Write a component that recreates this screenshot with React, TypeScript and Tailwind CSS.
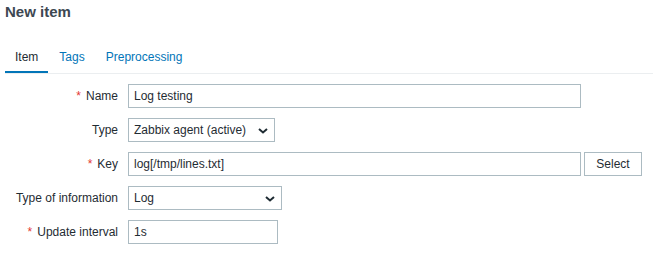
function Chevron() {
  return (
    <svg width="10" height="6" viewBox="0 0 10 6" className="absolute right-[6px] top-[9px]">
      <path d="M1 1l4 3.5L9 1" fill="none" stroke="#1f2c33" strokeWidth="2" />
    </svg>
  );
}

function Label({ text, required }: { text: string; required?: boolean }) {
  return (
    <div className="flex h-6 items-center justify-end text-[12px] text-[#1f2c33]">
      {required && <span className="mr-[5px] text-[#e33734]">*</span>}
      {text}
    </div>
  );
}

function Field({ value, width }: { value: string; width: string }) {
  return (
    <div
      className={`flex h-6 items-center border border-[#acbbc2] bg-white pl-[5px] text-[12px] text-[#1f2c33] ${width}`}
    >
      {value}
    </div>
  );
}

function Select({ value, width }: { value: string; width: string }) {
  return (
    <div
      className={`relative flex h-6 items-center border border-[#acbbc2] bg-white pl-[5px] text-[12px] text-[#1f2c33] ${width}`}
    >
      {value}
      <Chevron />
    </div>
  );
}

export default function App() {
  return (
    <div className="h-[254px] w-[653px] bg-white font-['Liberation_Sans',Arial,sans-serif]">
      <h1 className="pl-[5px] pt-[3px] text-[15px] font-bold leading-[18px] text-[#3d4852]">New item</h1>

      <div className="ml-[5px] mt-[29px] flex border-b border-[#ebeef0] text-[12px] leading-[14px]">
        <div className="border-b-2 border-[#0275b8] px-[10px] pb-[7px] text-[#1f2c33]">Item</div>
        <div className="px-[11px] pb-[9px] text-[#0275b8]">Tags</div>
        <div className="px-[10px] pb-[9px] text-[#0275b8]">Preprocessing</div>
      </div>

      <div className="mt-[10px] grid grid-cols-[113px_1fr] gap-x-[10px] gap-y-[10px] pl-[5px]">
        <Label text="Name" required />
        <Field value="Log testing" width="w-[453px]" />

        <Label text="Type" />
        <Select value="Zabbix agent (active)" width="w-[147px]" />

        <Label text="Key" required />
        <div className="flex gap-[3px]">
          <Field value="log[/tmp/lines.txt]" width="w-[453px]" />
          <button className="h-6 w-[58px] border border-[#acbbc2] bg-white text-[12px] text-[#1f2c33]">
            Select
          </button>
        </div>

        <Label text="Type of information" />
        <Select value="Log" width="w-[154px]" />

        <Label text="Update interval" required />
        <Field value="1s" width="w-[150px]" />
      </div>
    </div>
  );
}
